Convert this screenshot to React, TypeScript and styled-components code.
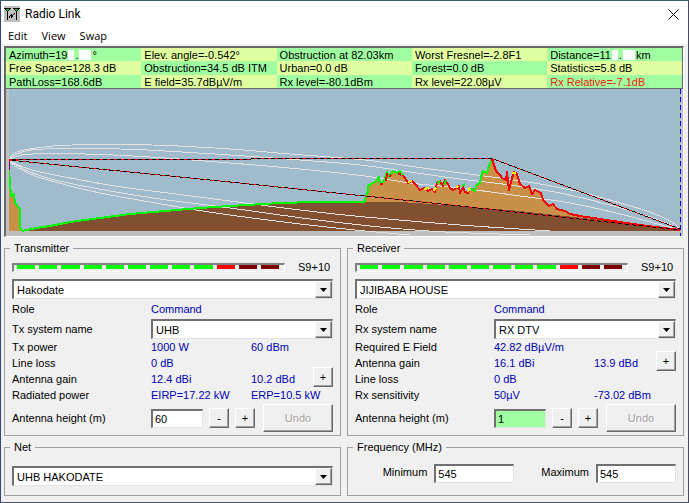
import React from "react";
import styled, { createGlobalStyle } from "styled-components";

const GlobalStyle = createGlobalStyle`
  * { box-sizing: border-box; }
  body {
    margin: 0;
    background: #f0f0f0;
    color: #000;
    font: 11px/14px "Liberation Sans", Arial, sans-serif;
  }
  button, input, select { font: inherit; color: inherit; }
`;

const Window = styled.div`
  display: flex;
  flex-direction: column;
  min-height: 100vh;
  border: 1px solid #3c4470;
  border-top-color: #36606c;
  border-right-color: #4a4a5c;
  border-bottom-color: #4c5866;
  background: #f0f0f0;
`;

const TitleBar = styled.header`
  display: flex;
  align-items: center;
  gap: 5px;
  height: 26px;
  padding: 0 9px 0 3px;
  background: #fff;
  font: 12px/16px Roboto, "Open Sans", sans-serif;
`;

const Title = styled.h1`
  flex: 1;
  margin: 0;
  font: inherit;
`;

const CloseButton = styled.button`
  display: flex;
  padding: 0;
  border: 0;
  background: none;
`;

const MenuBar = styled.nav`
  display: flex;
  gap: 14px;
  height: 17px;
  padding: 0 7px;
  background: #fff;
`;

const MenuItem = styled.button`
  padding: 0;
  border: 0;
  background: none;
  font: 11px/16px "Open Sans", "Noto Sans", sans-serif;
`;

const Content = styled.main`
  padding: 2px 4px 6px 3px;
`;

const ChartFrame = styled.section`
  border: 2px solid #696969;
  border-right: 1px solid #fff;
  border-bottom: 1px solid #fff;
  background: #c0c0c0;
`;

const Stats = styled.table`
  width: 100%;
  height: 41px;
  border-collapse: collapse;
  table-layout: fixed;
  border-right: 1px solid #696969;
  border-bottom: 1px solid #696969;
`;

const Stat = styled.td<{ $green: boolean; $alert?: boolean }>`
  padding: 1px 0 0 3px;
  line-height: 12px;
  white-space: nowrap;
  background: ${(p) => (p.$green ? "#a0ffa0" : "#e0ffa0")};
  color: ${(p) => (p.$alert ? "#f02010" : "#000")};
`;

const Blank = styled.span<{ $wide?: boolean }>`
  display: inline-block;
  width: ${(p) => (p.$wide ? 12 : 6)}px;
  height: 10px;
  margin: 0 1px;
  vertical-align: -1px;
  background: #fff;
`;

const Profile = styled.svg`
  display: block;
  width: calc(100% - 3px);
  height: 147px;
  margin-left: 3px;
`;

const Panels = styled.div`
  display: grid;
  grid-template-columns: 1fr 1fr;
  gap: 4px 6px;
  margin-top: 4px;
`;

const Group = styled.fieldset`
  min-width: 0;
  margin: 0;
  padding: 8px 7px 2px;
  border: 1px solid #a0a0a0;
`;

const Legend = styled.legend`
  height: 14px;
  margin-left: -2px;
  padding: 0 4px;
`;

const SignalRow = styled.div`
  display: grid;
  grid-template-columns: 1fr 35px;
  gap: 13px;
  align-items: center;
  height: 9px;
  margin-bottom: 7px;
  line-height: 9px;
`;

const Meter = styled.div`
  display: flex;
  gap: 4px;
  height: 9px;
  padding: 0 5px 2px 3px;
  border: 2px solid #808080;
  border-right: 1px solid #fff;
  border-bottom: 1px solid #fff;
`;

const Segment = styled.span<{ $color: string }>`
  flex: 1;
  height: 4px;
  background: ${(p) => p.$color};
`;

const SelectBox = styled.div`
  display: grid;
  grid-template-columns: 1fr 17px;
  height: 20px;
  min-width: 0;
  border: 2px solid #707070;
  border-right: 1px solid #e3e3e3;
  border-bottom: 1px solid #e3e3e3;
  background: #fff;
`;

const NativeSelect = styled.select`
  grid-area: 1 / 1 / 2 / 3;
  min-width: 0;
  padding: 0 18px 0 3px;
  border: 0;
  appearance: none;
  background: transparent;
`;

const Arrow = styled.span`
  grid-area: 1 / 2;
  display: flex;
  align-items: center;
  justify-content: center;
  border: 1px solid #fff;
  border-right-color: #696969;
  border-bottom-color: #696969;
  box-shadow: inset -1px -1px #a0a0a0;
  background: #f0f0f0;
  pointer-events: none;
`;

const Fields = styled.div`
  display: grid;
  grid-template-columns: 139px 100px minmax(0, 1fr) 20px;
  grid-auto-rows: 16px;
  align-items: center;
  white-space: nowrap;
`;

const RoleRow = styled(Fields)`
  grid-auto-rows: 20px;
`;

const SystemRow = styled.div`
  display: grid;
  grid-template-columns: 139px 1fr;
  align-items: center;
`;

const Label = styled.span`
  grid-column: 1;
`;

const Value = styled.span<{ $second?: boolean }>`
  grid-column: ${(p) => (p.$second ? 3 : 2)};
  color: #0000b4;
`;

const PushButton = styled.button`
  height: 20px;
  width: 20px;
  padding: 0;
  border: 1px solid #fff;
  border-right-color: #696969;
  border-bottom-color: #696969;
  box-shadow: inset -1px -1px #a0a0a0;
  background: #f0f0f0;
  line-height: 14px;
`;

const GainButton = styled(PushButton)<{ $row: number }>`
  grid-column: 4;
  grid-row: ${(p) => p.$row} / span 2;
  align-self: end;
`;

const UndoButton = styled(PushButton)`
  flex: 1;
  width: auto;
  height: 28px;
  margin-left: 2px;
  color: #a0a0a0;
  text-shadow: 1px 1px #fff;
`;

const TextInput = styled.input<{ $green?: boolean; $width: number }>`
  width: ${(p) => p.$width}px;
  height: 19px;
  padding: 0 2px;
  border: 2px solid #707070;
  border-right: 1px solid #e3e3e3;
  border-bottom: 1px solid #e3e3e3;
  background: ${(p) => (p.$green ? "#a0ffa0" : "#fff")};
`;

const HeightRow = styled.div`
  display: grid;
  grid-template-columns: 139px 1fr;
  align-items: center;
  height: 30px;
  white-space: nowrap;
`;

const HeightControls = styled.div`
  display: flex;
  align-items: center;
  gap: 6px;
`;

const NetRow = styled.div`
  padding: 4px 0 7px;
`;

const FrequencyRow = styled.div`
  display: flex;
  justify-content: flex-end;
  gap: 27px;
  padding-top: 2px;
`;

const FrequencyField = styled.label`
  display: flex;
  gap: 7px;
  line-height: 16px;
`;

type Point = [number, number];

const smooth = (points: Point[]) =>
  points.reduce((path, [x, y], i) => {
    if (i === 0) return `M${x} ${y}`;
    const before = points[i - 2] ?? points[i - 1];
    const from = points[i - 1];
    const after = points[i + 1] ?? points[i];
    const c1 = [from[0] + (x - before[0]) / 6, from[1] + (y - before[1]) / 6];
    const c2 = [x - (after[0] - from[0]) / 6, y - (after[1] - from[1]) / 6];
    return `${path} C${c1} ${c2} ${x},${y}`;
  }, "");

const fresnel: Point[][] = [
  [[9, 160], [13, 154], [24, 150], [45, 147], [72, 145], [152, 145], [230, 149], [290, 154], [365, 160], [430, 169], [500, 178], [540, 184], [580, 192], [620, 203], [650, 212], [672, 222], [680, 229]],
  [[9, 160], [15, 155], [26, 151], [45, 149], [120, 149], [165, 151], [230, 155], [300, 160], [360, 165], [410, 172], [460, 179], [510, 185], [560, 193], [610, 205], [650, 217], [680, 229]],
  [[9, 160], [18, 156], [32, 154], [85, 154], [150, 157], [230, 163], [300, 169], [365, 176], [410, 183], [460, 188], [520, 196], [570, 203], [620, 214], [680, 230]],
  [[9, 160], [16, 164], [32, 170], [60, 176], [115, 186], [160, 192], [230, 201], [300, 210], [365, 217], [460, 225], [550, 231]],
  [[9, 160], [16, 165], [30, 172], [55, 180], [110, 191], [160, 199], [230, 208], [310, 219], [380, 227], [445, 232], [530, 235]],
  [[9, 160], [15, 166], [30, 174], [55, 182], [100, 193], [150, 202], [190, 209], [230, 215], [300, 224], [365, 231], [410, 235]],
];

const shore = "9,170 10,184 11,196 14,194 15,203 20,209 20,228 22,231";
const sea = "22,231 36,228 50,226 70,222 100,218 130,214 165,211 200,208 230,206 280,203 315,202 365,202";
const hillA = "365,202 366,195 368,192 368,186 371,184 375,182 379,177 380,184 384,181 387,172 389,177 393,171 397,173 400,171 403,175";
const hillB = "403,175 408,183 412,181 416,185 420,190 424,188 428,191 432,189 435,192 437,183 440,181 443,186 445,180 448,184 450,188 453,190 457,188 459,186 460,193 463,187 465,192 468,193 470,188 475,190";
const rise = "475,186 480,183 481,177 483,171 487,173 489,165 492,159";
const slope = "492,159 494,165 496,171 500,175 502,178 506,180 507,172 509,190 512,178 514,172 517,174 520,184 525,188 529,186 532,194 535,190 541,193 543,200 549,206 553,204 557,209 565,211 570,214 580,216 600,219 640,225 680,230";
const horizon = "22,231 36,228 50,226 70,222 100,218 130,214 165,211 200,208 230,206 280,203 315,202 365,202 400,202 460,206 520,211 600,220 680,230";

function TerrainProfile() {
  return (
    <Profile viewBox="9 89 674 147" preserveAspectRatio="none" shapeRendering="crispEdges" role="img" aria-label="Terrain profile" fill="none">
      <rect x="9" y="89" width="674" height="147" fill="#c0c0c0" />
      <rect x="9" y="89" width="671" height="142" fill="#a0bccc" />
      <polygon points={`9,231 ${shore}`} fill="#c89048" />
      <polygon points={`${hillA} ${hillB} ${rise} ${slope}`} fill="#c89048" />
      <polygon points={`${horizon} 680,231 22,231`} fill="#805030" />
      {fresnel.map((points, i) => (
        <path key={i} d={smooth(points)} stroke="#e2e2e2" />
      ))}
      <g strokeWidth="2" strokeLinejoin="round">
        <polyline points={shore} stroke="#00f800" />
        <polyline points={sea} stroke="#00f800" />
        <polyline points={hillA} stroke="#00f800" />
        <polyline points={hillB} stroke="#f80000" />
        <polyline points={rise} stroke="#00f800" />
        <polyline points={slope} stroke="#f80000" />
        <path d="M380 184L383 184M386 181L387 173M389 177L391 175M398 173L401 175" stroke="#f80000" />
        <path d="M437 184L440 181M444 185L446 180M462 186L465 184M470 188L475 191L476 187" stroke="#00f800" />
        <path d="M408 182L412 181M424 189L429 188M433 191L436 188M456 188L458 186M468 192L470 187M512 173H516" stroke="#f8f800" />
      </g>
      <path d="M9 159V170" stroke="#800080" strokeWidth="2" />
      {["M9 159.500H250L252 158.500H492L680 229", "M9 160L230 182L365 196L460 206L680 230"].map((d) => (
        <g key={d}>
          <path d={d} stroke="#000" />
          <path d={d} stroke="#f00000" strokeDasharray="3 4" />
        </g>
      ))}
      <path d="M680.500 89V236" stroke="#0000ff" strokeDasharray="5 3" />
    </Profile>
  );
}

const hidden = (
  <>
    <Blank />.<Blank $wide />
  </>
);

const stats: React.ReactNode[][] = [
  [<>Azimuth=19{hidden}°</>, "Elev. angle=-0.542°", "Obstruction at 82.03km", "Worst Fresnel=-2.8F1", <>Distance=11{hidden}km</>],
  ["Free Space=128.3 dB", "Obstruction=34.5 dB ITM", "Urban=0.0 dB", "Forest=0.0 dB", "Statistics=5.8 dB"],
  ["PathLoss=168.6dB", "E field=35.7dBµV/m", "Rx level=-80.1dBm", "Rx level=22.08µV", "Rx Relative=-7.1dB"],
];

const segmentColors = [...Array(9).fill("#00ff00"), "#ff0000", "#800000", "#800000"];

function Combo({ label, id, value }: { label?: string; id?: string; value: string }) {
  return (
    <SelectBox>
      <NativeSelect id={id} aria-label={label} defaultValue={value}>
        <option>{value}</option>
      </NativeSelect>
      <Arrow aria-hidden="true">
        <svg width="7" height="4" viewBox="0 0 7 4">
          <path d="M0 0H7L3.500 4Z" />
        </svg>
      </Arrow>
    </SelectBox>
  );
}

interface StationProps {
  id: string;
  title: string;
  station: string;
  systemLabel: string;
  system: string;
  rows: [string, string, string?][];
  gainRow: number;
  height: string;
  changed?: boolean;
}

function Station({ id, title, station, systemLabel, system, rows, gainRow, height, changed }: StationProps) {
  return (
    <Group>
      <Legend>{title}</Legend>
      <SignalRow>
        <Meter role="meter" aria-label={`${title} signal`} aria-valuemin={0} aria-valuemax={12} aria-valuenow={10}>
          {segmentColors.map((color, i) => (
            <Segment key={i} $color={color} />
          ))}
        </Meter>
        <span>S9+10</span>
      </SignalRow>
      <Combo label={`${title} station`} value={station} />
      <RoleRow>
        <Label>Role</Label>
        <Value>Command</Value>
      </RoleRow>
      <SystemRow>
        <label htmlFor={`${id}-system`}>{systemLabel}</label>
        <Combo id={`${id}-system`} value={system} />
      </SystemRow>
      <Fields>
        {rows.map(([label, first, second]) => (
          <React.Fragment key={label}>
            <Label>{label}</Label>
            <Value>{first}</Value>
            {second && <Value $second>{second}</Value>}
          </React.Fragment>
        ))}
        <GainButton type="button" $row={gainRow - 1} aria-label="Antenna pattern">+</GainButton>
      </Fields>
      <HeightRow>
        <label htmlFor={`${id}-height`}>Antenna height (m)</label>
        <HeightControls>
          <TextInput id={`${id}-height`} defaultValue={height} $green={changed} $width={52} />
          <PushButton type="button">-</PushButton>
          <PushButton type="button">+</PushButton>
          <UndoButton type="button" disabled>Undo</UndoButton>
        </HeightControls>
      </HeightRow>
    </Group>
  );
}

export default function App() {
  return (
    <Window>
      <GlobalStyle />
      <TitleBar>
        <svg width="16" height="16" viewBox="0 0 16 16" fill="none" shapeRendering="crispEdges" aria-hidden="true">
          <rect width="16" height="16" fill="#c0c0c0" />
          <path d="M1 3H6L3.500 6ZM10 3H15L12.500 6Z" fill="#00d000" />
          <path d="M0 2.500H7M9 2.500H16M1 3L3.500 5.500L6 3M10 3L12.500 5.500L15 3M3.500 5V14M12.500 5V14M5 11.500L7.500 8.500V11.500L10.500 7" stroke="#000" />
        </svg>
        <Title>Radio Link</Title>
        <CloseButton type="button" aria-label="Close">
          <svg width="11" height="11" viewBox="0 0 11 11" stroke="#000">
            <path d="M.5 .5L10.500 10.500M10.500 .5L.5 10.500" />
          </svg>
        </CloseButton>
      </TitleBar>
      <MenuBar>
        <MenuItem type="button">Edit</MenuItem>
        <MenuItem type="button">View</MenuItem>
        <MenuItem type="button">Swap</MenuItem>
      </MenuBar>
      <Content>
        <ChartFrame>
          <Stats>
            <tbody>
              {stats.map((row, r) => (
                <tr key={r}>
                  {row.map((text, c) => (
                    <Stat key={c} $green={(r + c) % 2 === 0} $alert={r === 2 && c === 4}>
                      {text}
                    </Stat>
                  ))}
                </tr>
              ))}
            </tbody>
          </Stats>
          <TerrainProfile />
        </ChartFrame>
        <Panels>
          <Station
            id="tx"
            title="Transmitter"
            station="Hakodate"
            systemLabel="Tx system name"
            system="UHB"
            rows={[
              ["Tx power", "1000 W", "60 dBm"],
              ["Line loss", "0 dB"],
              ["Antenna gain", "12.4 dBi", "10.2 dBd"],
              ["Radiated power", "EIRP=17.22 kW", "ERP=10.5 kW"],
            ]}
            gainRow={3}
            height="60"
          />
          <Station
            id="rx"
            title="Receiver"
            station="JIJIBABA HOUSE"
            systemLabel="Rx system name"
            system="RX DTV"
            rows={[
              ["Required E Field", "42.82 dBµV/m"],
              ["Antenna gain", "16.1 dBi", "13.9 dBd"],
              ["Line loss", "0 dB"],
              ["Rx sensitivity", "50µV", "-73.02 dBm"],
            ]}
            gainRow={2}
            height="1"
            changed
          />
          <Group>
            <Legend>Net</Legend>
            <NetRow>
              <Combo label="Net" value="UHB HAKODATE" />
            </NetRow>
          </Group>
          <Group>
            <Legend>Frequency (MHz)</Legend>
            <FrequencyRow>
              <FrequencyField>
                Minimum
                <TextInput defaultValue="545" $width={80} />
              </FrequencyField>
              <FrequencyField>
                Maximum
                <TextInput defaultValue="545" $width={80} />
              </FrequencyField>
            </FrequencyRow>
          </Group>
        </Panels>
      </Content>
    </Window>
  );
}
